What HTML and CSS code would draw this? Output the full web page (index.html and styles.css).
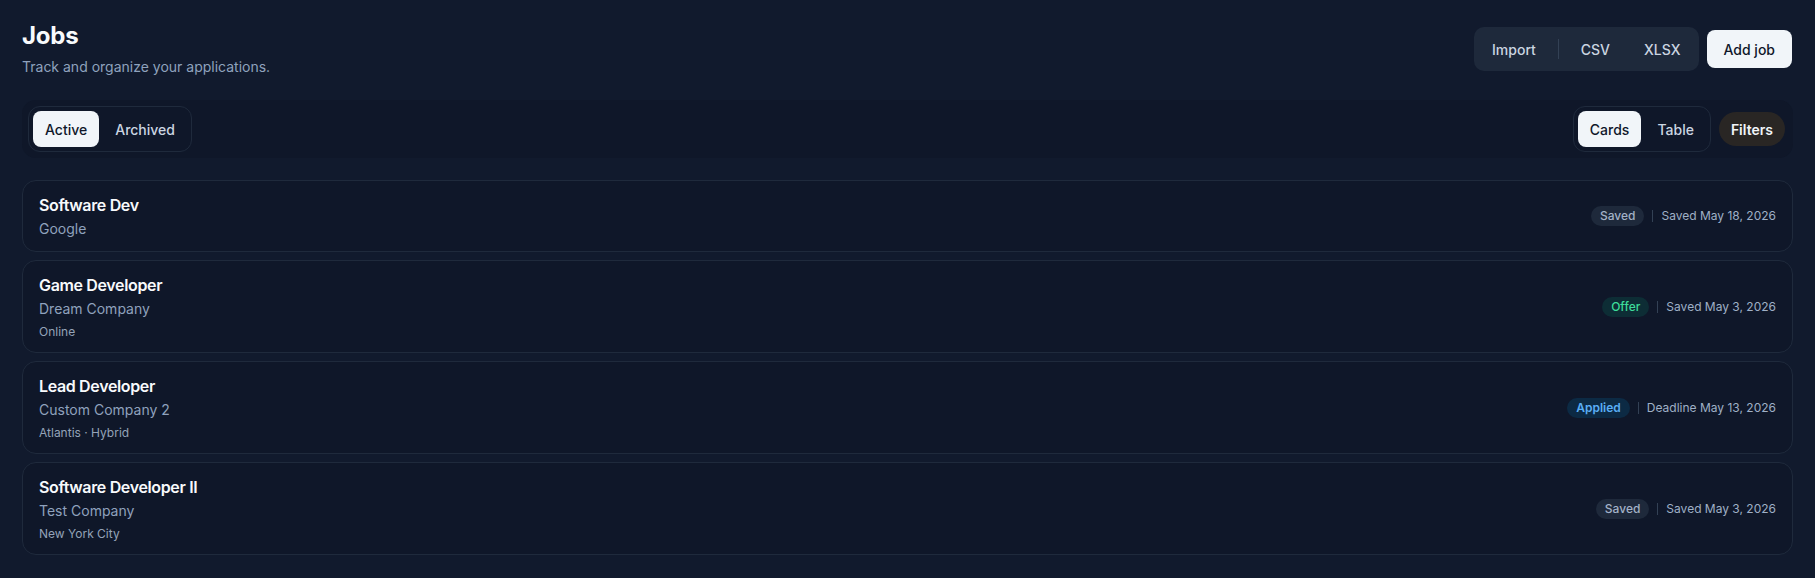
FILE: index.html
```html
<!DOCTYPE html>
<html lang="en">
<head>
<meta charset="utf-8">
<title>Jobs</title>
<link rel="stylesheet" href="styles.css">
</head>
<body>
<div class="page">
  <header class="header">
    <div class="heading">
      <h1 class="title">Jobs</h1>
      <p class="subtitle">Track and organize your applications.</p>
    </div>
    <div class="actions">
      <div class="io-group">
        <button class="io-btn">Import</button>
        <span class="io-divider"></span>
        <button class="io-btn">CSV</button>
        <button class="io-btn">XLSX</button>
      </div>
      <button class="primary-btn">Add job</button>
    </div>
  </header>

  <div class="toolbar">
    <div class="segment">
      <button class="seg-btn is-active">Active</button>
      <button class="seg-btn">Archived</button>
    </div>
    <div class="toolbar-right">
      <div class="segment">
        <button class="seg-btn is-active">Cards</button>
        <button class="seg-btn">Table</button>
      </div>
      <button class="filters-btn">Filters</button>
    </div>
  </div>

  <ul class="job-list">
    <li class="job-card">
      <div class="job-info">
        <div class="job-title">Software Dev</div>
        <div class="job-company">Google</div>
      </div>
      <div class="job-meta">
        <span class="badge badge-saved">Saved</span>
        <span class="meta-divider"></span>
        <span class="meta-date">Saved May 18, 2026</span>
      </div>
    </li>
    <li class="job-card">
      <div class="job-info">
        <div class="job-title">Game Developer</div>
        <div class="job-company">Dream Company</div>
        <div class="job-location">Online</div>
      </div>
      <div class="job-meta">
        <span class="badge badge-offer">Offer</span>
        <span class="meta-divider"></span>
        <span class="meta-date">Saved May 3, 2026</span>
      </div>
    </li>
    <li class="job-card">
      <div class="job-info">
        <div class="job-title">Lead Developer</div>
        <div class="job-company">Custom Company 2</div>
        <div class="job-location">Atlantis · Hybrid</div>
      </div>
      <div class="job-meta">
        <span class="badge badge-applied">Applied</span>
        <span class="meta-divider"></span>
        <span class="meta-date">Deadline May 13, 2026</span>
      </div>
    </li>
    <li class="job-card">
      <div class="job-info">
        <div class="job-title">Software Developer II</div>
        <div class="job-company">Test Company</div>
        <div class="job-location">New York City</div>
      </div>
      <div class="job-meta">
        <span class="badge badge-saved">Saved</span>
        <span class="meta-divider"></span>
        <span class="meta-date">Saved May 3, 2026</span>
      </div>
    </li>
  </ul>
</div>
</body>
</html>
```

FILE: styles.css
```css
* {
  box-sizing: border-box;
}

html, body {
  margin: 0;
  padding: 0;
  background: #111a2d;
}

body {
  font-family: Inter, "Noto Sans", "Liberation Sans", sans-serif;
  color: #f1f5f9;
}

button {
  font-family: inherit;
  border: none;
  cursor: pointer;
  margin: 0;
}

.page {
  padding: 17px 22px 20px;
}

.header {
  display: flex;
  justify-content: space-between;
  align-items: flex-start;
}

.heading {
  margin-top: 3px;
}

.title {
  margin: 0;
  font-size: 24px;
  line-height: 32px;
  font-weight: 700;
  color: #f8fafc;
  letter-spacing: -0.2px;
}

.subtitle {
  margin: 5px 0 0;
  font-size: 14px;
  line-height: 20px;
  color: #8fa2bd;
}

.actions {
  display: flex;
  align-items: center;
  gap: 8px;
  margin-top: 10px;
  margin-right: 1px;
}

.io-group {
  display: flex;
  align-items: center;
  gap: 4px;
  padding: 3px;
  background: #1e293b;
  border-radius: 10px;
}

.io-btn {
  height: 38px;
  padding: 0 15px;
  background: transparent;
  color: #cbd5e1;
  font-size: 14px;
  font-weight: 500;
  border-radius: 8px;
}

.io-divider {
  width: 1px;
  height: 20px;
  margin: 0 3px;
  background: #334155;
}

.primary-btn {
  height: 38px;
  padding: 0 17px;
  background: #f1f5f9;
  color: #0f172a;
  font-size: 14px;
  font-weight: 500;
  border-radius: 8px;
}

.toolbar {
  display: flex;
  justify-content: space-between;
  align-items: center;
  margin-top: 23px;
  padding: 6px 8px 6px 6px;
  background: #0f1729;
  border-radius: 14px;
}

.toolbar-right {
  display: flex;
  align-items: center;
  gap: 8px;
}

.segment {
  display: flex;
  gap: 4px;
  padding: 4px;
  border: 1px solid #1f2a3c;
  border-radius: 12px;
  background: #0f1729;
}

.seg-btn {
  height: 36px;
  padding: 0 12px;
  background: transparent;
  color: #cbd5e1;
  font-size: 14px;
  font-weight: 500;
  border-radius: 8px;
}

.seg-btn.is-active {
  background: #f1f5f9;
  color: #0f172a;
}

.filters-btn {
  height: 34px;
  padding: 0 12px;
  background: #292624;
  color: #f1f5f9;
  font-size: 14px;
  font-weight: 600;
  border-radius: 17px;
}

.job-list {
  list-style: none;
  margin: 22px 0 0;
  padding: 0;
  display: flex;
  flex-direction: column;
  gap: 8px;
}

.job-card {
  display: flex;
  justify-content: space-between;
  align-items: center;
  padding: 12px 16px;
  background: #0f1729;
  border: 1px solid #1f2a3c;
  border-radius: 14px;
}

.job-title {
  font-size: 16px;
  line-height: 24px;
  font-weight: 600;
  color: #f8fafc;
  letter-spacing: -0.35px;
}

.job-company {
  margin-top: 2px;
  font-size: 14px;
  line-height: 20px;
  color: #8fa2bd;
}

.job-location {
  margin-top: 5px;
  font-size: 12px;
  line-height: 16px;
  color: #94a3b8;
}

.job-meta {
  display: flex;
  align-items: center;
  gap: 8px;
}

.badge {
  height: 20px;
  line-height: 20px;
  padding: 0 9px;
  border-radius: 10px;
  font-size: 12px;
  font-weight: 500;
}

.badge-saved {
  background: #1e293b;
  color: #a3b2c7;
}

.badge-offer {
  background: #0d2d35;
  color: #3ddc9a;
}

.badge-applied {
  background: #0c2a44;
  color: #5aaef5;
  font-weight: 600;
}

.meta-divider {
  width: 1px;
  height: 12px;
  background: #334155;
}

.meta-date {
  font-size: 12px;
  line-height: 16px;
  color: #9fb0c6;
}
```
